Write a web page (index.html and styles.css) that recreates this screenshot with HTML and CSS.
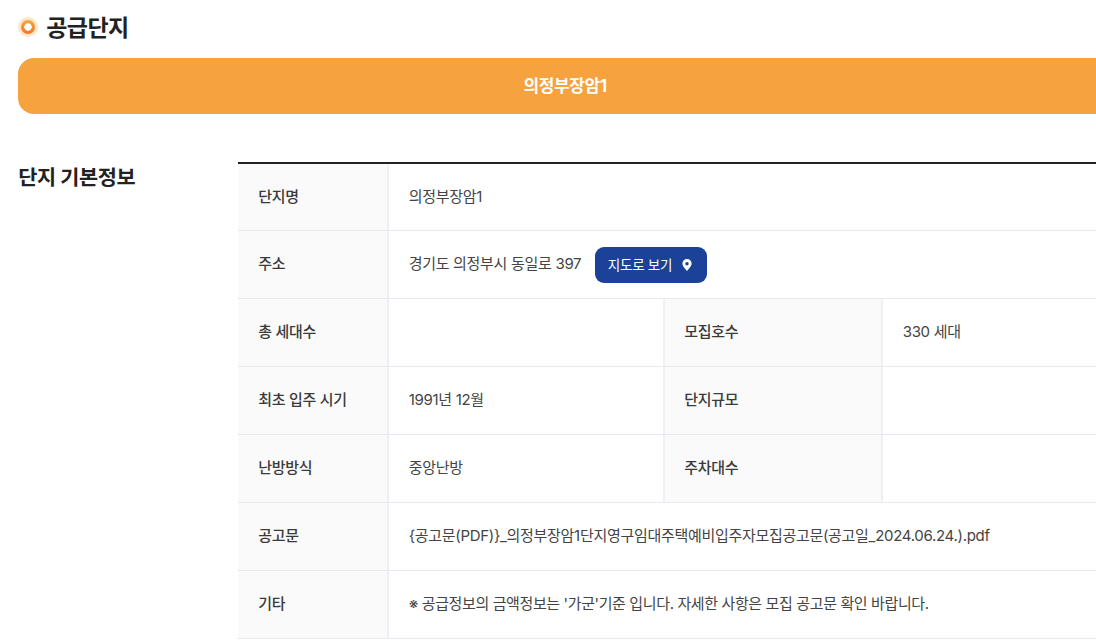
FILE: index.html
```html
<!DOCTYPE html>
<html lang="ko">
<head>
<meta charset="utf-8">
<title>공급단지</title>
<link rel="stylesheet" href="styles.css">
</head>
<body>
<main class="page">
  <h2 class="title"><span class="dot"></span>공급단지</h2>
  <div class="banner"><span class="banner-text">의정부장암1</span></div>
  <section class="info">
    <h3 class="info-title">단지 기본정보</h3>
    <div class="table">
      <div class="row">
        <div class="th"><span>단지명</span></div>
        <div class="td"><span>의정부장암1</span></div>
      </div>
      <div class="row">
        <div class="th"><span>주소</span></div>
        <div class="td"><span>경기도 의정부시 동일로 397</span>
          <a class="map-btn"><span class="map-label">지도로 보기</span>
            <svg class="pin" width="10" height="12" viewBox="0 0 10 12"><path fill="#fff" fill-rule="evenodd" d="M5 0a4.6 4.6 0 0 1 4.6 4.6C9.6 7.6 5 12 5 12S.4 7.6.4 4.6A4.6 4.6 0 0 1 5 0Zm0 3a1.7 1.7 0 1 0 0 3.4A1.7 1.7 0 0 0 5 3Z"/></svg>
          </a>
        </div>
      </div>
      <div class="row split">
        <div class="th"><span>총 세대수</span></div>
        <div class="td"></div>
        <div class="th th2"><span>모집호수</span></div>
        <div class="td"><span>330 세대</span></div>
      </div>
      <div class="row split">
        <div class="th"><span>최초 입주 시기</span></div>
        <div class="td"><span>1991년 12월</span></div>
        <div class="th th2"><span>단지규모</span></div>
        <div class="td"></div>
      </div>
      <div class="row split">
        <div class="th"><span>난방방식</span></div>
        <div class="td"><span>중앙난방</span></div>
        <div class="th th2"><span>주차대수</span></div>
        <div class="td"></div>
      </div>
      <div class="row">
        <div class="th"><span>공고문</span></div>
        <div class="td"><span>{공고문(PDF)}_의정부장암1단지영구임대주택예비입주자모집공고문(공고일_2024.06.24.).pdf</span></div>
      </div>
      <div class="row">
        <div class="th"><span>기타</span></div>
        <div class="td note"><span>※ 공급정보의 금액정보는 '가군'기준 입니다. 자세한 사항은 모집 공고문 확인 바랍니다.</span></div>
      </div>
    </div>
  </section>
</main>
</body>
</html>
```
FILE: styles.css
```css
* { box-sizing: border-box; }
html, body { margin: 0; height: 644px; overflow: hidden; background: #fff; }
body {
  font-family: Inter, "Noto Sans CJK KR", sans-serif;
  color: #333;
}
.page { width: 1200px; padding: 9px 0 0 18.3px; }
.title {
  display: flex; align-items: center; gap: 8px;
  margin: 0 0 15px; height: 34px;
  font-size: 23px; font-weight: 700; letter-spacing: -0.6px; color: #222;
}
.dot {
  width: 20px; height: 20px; border-radius: 50%; margin-top: 2px;
  background: #fce6c9;
  display: flex; align-items: center; justify-content: center;
}
.dot::before {
  content: ""; width: 14px; height: 14px; border-radius: 50%;
  background: radial-gradient(circle, #fff 0 3.4px, transparent 4px), linear-gradient(#f9a93f, #f2762e);
}
.banner {
  height: 56px; border-radius: 16px; background: #f5a23f;
  display: flex; align-items: center; justify-content: center;
  color: #fff; font-size: 17px; font-weight: 700; letter-spacing: -0.4px;
  padding: 0 88px 4px 0;
}
.info { display: flex; margin-top: 48px; }
.info-title {
  width: 220px; flex: none; margin: 0; padding-top: 1px;
  font-size: 20.8px; line-height: 30px; font-weight: 700; letter-spacing: -0.4px; color: #222;
}
.table { flex: 1; border-top: 2px solid #222; }
.row {
  display: grid; grid-template-columns: 151px 1fr;
  height: 68px; border-bottom: 1px solid #e8e8ee;
  font-size: 15px; letter-spacing: -0.3px;
}
.row:first-child { height: 67px; }
.row.split { grid-template-columns: 151px 274px 220px 1fr; }
.th, .td { display: flex; align-items: center; padding-bottom: 4px; }
.th {
  padding-left: 20px; background: #fafafa; font-weight: 500; color: #3a3a3a;
  border-right: 2px solid #eff0f3;
}
.th2 { border-left: 2px solid #eff0f3; padding-left: 19px; }
.td { padding-left: 19.4px; color: #444; gap: 14px; }
.note { letter-spacing: -0.38px; }
.map-btn {
  display: inline-flex; align-items: center; gap: 10px;
  height: 36px; padding: 0 15px 0 12.5px; border-radius: 9px; margin-bottom: -4px;
  background: #1b4198; color: #fff; font-size: 13.5px; letter-spacing: -0.25px;
}
.map-label { position: relative; top: -1px; }
.pin { display: block; }
```
